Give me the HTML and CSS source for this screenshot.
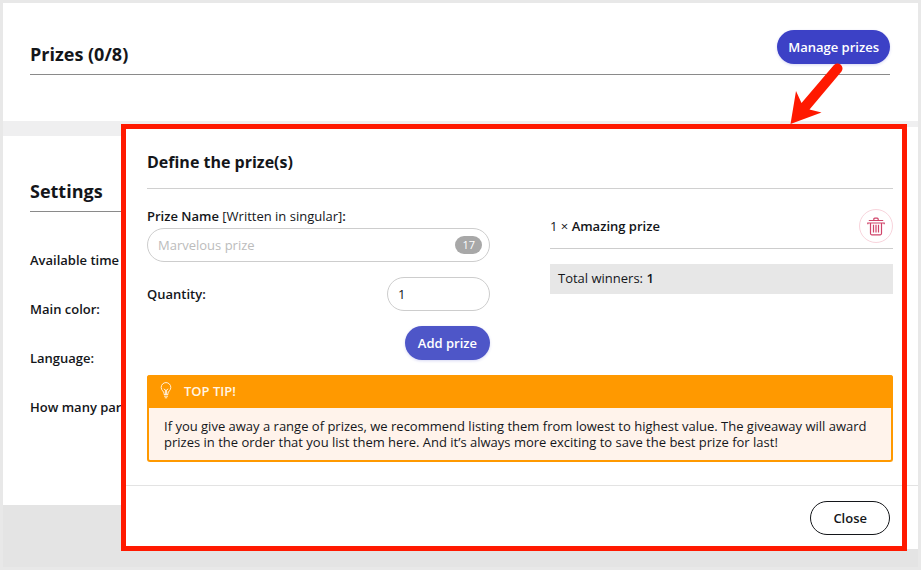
FILE: index.html
```html
<!DOCTYPE html>
<html lang="en">
<head>
    <meta charset="UTF-8">
    <meta name="viewport" content="width=device-width, initial-scale=1.0">
    <title>Prizes</title>
    <link rel="stylesheet" href="styles.css">
</head>
<body>

<main class="page">
    <section class="panel">
        <div class="panel-header">
            <h2>Prizes (0/8)</h2>
            <button type="button" class="button">Manage prizes</button>
        </div>
    </section>

    <section class="panel settings">
        <div class="panel-header">
            <h2>Settings</h2>
        </div>
        <ul class="settings-list">
            <li>Available time</li>
            <li>Main color:</li>
            <li>Language:</li>
            <li>How many par</li>
        </ul>
    </section>

    <!-- Prize dialog -->
    <div class="modal" role="dialog" aria-labelledby="modal-title">
        <div class="modal-body">
            <h3 class="modal-title" id="modal-title">Define the prize(s)</h3>

            <div class="columns">
                <form class="prize-form">
                    <label class="field-label" for="prize-name">Prize Name <span class="hint">[Written in singular]</span>:</label>
                    <div class="name-field">
                        <input type="text" id="prize-name" class="input" placeholder="Marvelous prize">
                        <span class="counter">17</span>
                    </div>
                    <div class="quantity-row">
                        <label class="field-label" for="quantity">Quantity:</label>
                        <input type="text" id="quantity" class="input quantity" inputmode="numeric" value="1">
                    </div>
                    <button type="button" class="button add-button">Add prize</button>
                </form>

                <div class="prize-list">
                    <div class="prize-item">
                        <span>1 × <strong>Amazing prize</strong></span>
                        <button type="button" class="delete-button" aria-label="Delete prize">
                            <svg width="18" height="19" viewBox="0 0 18 19" fill="none" stroke="#d0446a" stroke-width="1.2">
                                <path d="M6.8 3V2.2Q6.8 1.2 7.8 1.2H10.2Q11.2 1.2 11.2 2.2V3"/>
                                <path d="M1.8 3.5H16.2M0.8 7.2V6H17.2V7.2"/>
                                <path d="M3.5 6V16.6Q3.5 17.8 4.7 17.8H13.3Q14.5 17.8 14.5 16.6V6"/>
                                <path d="M6.5 7.8V15.6M9 7.8V15.6M11.5 7.8V15.6"/>
                            </svg>
                        </button>
                    </div>
                    <div class="total">Total winners: <strong>1</strong></div>
                </div>
            </div>

            <div class="tip">
                <div class="tip-header">
                    <svg width="12" height="17" viewBox="0 0 12 17" fill="none" stroke="#fff0d8" stroke-width="1">
                        <path d="M4 12.5V11.2C4 9.6 1.2 8.4 1.2 5.4A4.8 4.8 0 0 1 10.8 5.4C10.8 8.4 8 9.6 8 11.2V12.5Z"/>
                        <path d="M3.8 6.8L5.4 8.2V12M8.2 6.8L6.6 8.2V12M5.2 8.2H6.8"/>
                        <path d="M4 14.2H8M4.8 15.8H7.2"/>
                    </svg>
                    <strong>TOP TIP!</strong>
                </div>
                <p class="tip-text">If you give away a range of prizes, we recommend listing them from lowest to highest value. The giveaway will award prizes in the order that you list them here. And it’s always more exciting to save the best prize for last!</p>
            </div>
        </div>

        <div class="modal-footer">
            <button type="button" class="button close-button">Close</button>
        </div>

        <div class="highlight"></div>
    </div>

    <!-- Arrow from the button to the dialog -->
    <svg class="arrow" width="54" height="63" viewBox="0 0 54 63" fill="#ff1900">
        <path d="M1.5 62L7 29L12.5 41L44.5 3.5A5 5 0 0 1 52.5 9.5L20.5 47.5L32.5 50.5Z"/>
    </svg>
</main>

</body>
</html>
```
FILE: styles.css
```css
* {
    box-sizing: border-box;
}

body {
    margin: 0;
    font-family: "Open Sans", sans-serif;
    font-size: 13px;
    line-height: 16px;
    color: #14161a;
    background-color: #fff;
}

h2, h3, p, ul {
    margin: 0;
    padding: 0;
}

strong {
    font-weight: 600;
}

.page {
    position: relative;
    display: flex;
    flex-direction: column;
    gap: 15px;
    min-height: calc(100vh - 1px);
    border: 3px solid #e8e8e8;
    background-color: #e4e4e4;
}

.panel {
    padding: 27px 28px 46px 27px;
    background-color: #fff;
    box-shadow: 0 15px #efeff0;
}

.panel-header {
    display: flex;
    justify-content: space-between;
    align-items: center;
    padding-bottom: 10px;
    border-bottom: 1px solid #8a8a8a;
}

.panel-header h2 {
    font-size: 18px;
    line-height: 20px;
    font-weight: 700;
    padding-top: 14px;
}

.settings {
    position: relative;
    padding-top: 31px;
    padding-bottom: 90px;
    box-shadow: none;
}

.settings-list {
    display: flex;
    flex-direction: column;
    gap: 33px;
    padding-top: 40px;
    list-style: none;
    font-weight: 600;
}

.button {
    height: 34px;
    padding: 0 11px;
    border: none;
    border-radius: 17px;
    background-color: #3c41c6;
    box-shadow: 0 1px 3px rgba(60, 65, 198, 0.2);
    color: #fff;
    font-family: inherit;
    font-size: 13px;
    font-weight: 600;
    cursor: pointer;
}

.modal {
    position: absolute;
    top: 124px;
    left: 120px;
    right: 0;
    background-color: #fff;
}

.modal-body {
    padding: 23px 25px 23px 24px;
}

.modal-title {
    padding-bottom: 14px;
    border-bottom: 1px solid #d0d0d0;
    font-size: 16px;
    line-height: 24px;
    font-weight: 700;
}

.columns {
    display: grid;
    grid-template-columns: 1fr 1fr;
    gap: 60px;
    padding: 19px 0 15px;
}

.prize-form {
    display: flex;
    flex-direction: column;
}

.field-label {
    font-weight: 600;
}

.hint {
    font-weight: 400;
}

.name-field {
    position: relative;
    margin: 4px 0 15px;
}

.input {
    display: block;
    width: 100%;
    height: 34px;
    padding: 0 10px;
    border: 1px solid #cdcdcd;
    border-radius: 17px;
    background-color: #fff;
    color: #14161a;
    font-family: inherit;
    font-size: 13px;
}

.input::placeholder {
    color: #bcbcbc;
}

.counter {
    position: absolute;
    top: 8px;
    right: 8px;
    padding: 0 7px;
    border-radius: 9px;
    background-color: #a8a8a8;
    color: #fff;
    font-size: 11px;
    line-height: 18px;
}

.quantity-row {
    display: flex;
    justify-content: space-between;
    align-items: center;
    margin-bottom: 15px;
}

.quantity {
    width: 30%;
}

.add-button {
    align-self: flex-end;
    padding: 0 13px;
    background-color: #4e56c8;
}

.prize-item {
    display: flex;
    justify-content: space-between;
    align-items: center;
    margin-bottom: 15px;
    padding-bottom: 5px;
    border-bottom: 1px solid #cdcdcd;
}

.prize-list {
    padding-top: 1px;
}

.delete-button {
    display: flex;
    align-items: center;
    justify-content: center;
    width: 34px;
    height: 34px;
    padding: 0;
    border: 1px solid #f8d4dc;
    border-radius: 50%;
    background-color: #fff;
    cursor: pointer;
}

.total {
    padding: 6px 8px 8px;
    background-color: #e7e7e7;
}

.tip {
    border: 2px solid #ff9900;
    border-top: none;
    border-radius: 3px;
    background-color: #fff3eb;
}

.tip-header {
    display: flex;
    align-items: center;
    gap: 12px;
    margin: 0 -2px;
    padding: 7px 13px 9px;
    border-radius: 3px 3px 0 0;
    background-color: #ff9900;
    color: #fff5e5;
}

.tip-text {
    padding: 10px 8px 10px 15px;
}

.modal-footer {
    display: flex;
    justify-content: flex-end;
    padding: 15px 28px 14px;
    border-top: 1px solid #e3e3e3;
}

.close-button {
    padding: 0 22px;
    border: 1px solid #14161a;
    background-color: #fff;
    box-shadow: none;
    color: #14161a;
}

/* Red frame round the dialog */
.highlight {
    position: absolute;
    top: -3px;
    right: 11px;
    bottom: -2px;
    left: -2px;
    border: 5px solid #ff1900;
    pointer-events: none;
}

.arrow {
    position: absolute;
    top: 59px;
    right: 75px;
}
```
